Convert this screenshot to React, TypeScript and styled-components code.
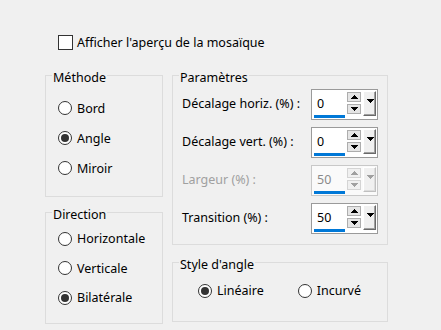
import React from 'react'
import styled, { createGlobalStyle } from 'styled-components'

const GlobalStyle = createGlobalStyle`
    html, body {
        margin: 0;
        padding: 0;
        background: #f0f0f0;
    }
    body {
        font-family: 'Noto Sans', 'Open Sans', sans-serif;
        font-size: 12.5px;
        color: #000;
    }
`

const methodes = ['Bord', 'Angle', 'Miroir']
const directions = ['Horizontale', 'Verticale', 'Bilatérale']

const params = [
    { label: 'Décalage horiz. (%) :', value: '0' },
    { label: 'Décalage vert. (%) :', value: '0' },
    { label: 'Largeur (%) :', value: '50', disabled: true },
    { label: 'Transition (%) :', value: '50' },
]

// petit triangle net (pas d'anticrénelage), comme les flèches Win32
function Tri({ w, h, up, color }: { w: number; h: number; up?: boolean; color: string }) {
    const pts = up ? `0,${h} ${w / 2},0 ${w},${h}` : `0,0 ${w},0 ${w / 2},${h}`
    return (
        <svg width={w} height={h} viewBox={`0 0 ${w} ${h}`} shapeRendering="crispEdges" style={{ display: 'block' }}>
            <polygon points={pts} fill={color} />
        </svg>
    )
}

function Radio({ label, checked }: { label: string; checked?: boolean }) {
    return (
        <RadioRow>
            <Circle>{checked && <Dot />}</Circle>
            <span>{label}</span>
        </RadioRow>
    )
}

function SpinBox({ value, disabled }: { value: string; disabled?: boolean }) {
    const arrowColor = disabled ? '#a0a0a0' : '#000'
    return (
        <Spin $disabled={disabled}>
            <Field $disabled={disabled}>{value}</Field>
            <Steppers>
                <StepButton $disabled={disabled}>
                    <Tri w={7} h={4} up color={arrowColor} />
                </StepButton>
                <StepButton $disabled={disabled}>
                    <Tri w={7} h={4} color={arrowColor} />
                </StepButton>
            </Steppers>
            <DropButton $disabled={disabled}>
                <Tri w={8} h={4} color={arrowColor} />
            </DropButton>
        </Spin>
    )
}

function App() {
    return (
        <>
            <GlobalStyle />
            <Page>
                <CheckRow>
                    <CheckBox />
                    <span>Afficher l'aperçu de la mosaïque</span>
                </CheckRow>
                <Columns>
                    <Column $width={118} $gap={4.5}>
                        <Group $pt={7} $pb={13}>
                            <Legend>Méthode</Legend>
                            <Body $pl={12}>
                                {methodes.map((m) => (
                                    <Radio key={m} label={m} checked={m === 'Angle'} />
                                ))}
                            </Body>
                        </Group>
                        <Group $pt={1.5} $pb={10} $rowH={29.5}>
                            <Legend>Direction</Legend>
                            <Body $pl={12}>
                                {directions.map((d) => (
                                    <Radio key={d} label={d} checked={d === 'Bilatérale'} />
                                ))}
                            </Body>
                        </Group>
                    </Column>
                    <Column $width={216} $gap={7.5}>
                        <Group $pt={2.5} $pb={10}>
                            <Legend>Paramètres</Legend>
                            <Body $pl={9} $pr={9} $gap={7}>
                                {params.map((p) => (
                                    <ParamRow key={p.label}>
                                        <ParamLabel $disabled={p.disabled}>{p.label}</ParamLabel>
                                        <SpinBox value={p.value} disabled={p.disabled} />
                                    </ParamRow>
                                ))}
                            </Body>
                        </Group>
                        <Group $pt={2.5} $pb={15}>
                            <Legend>Style d'angle</Legend>
                            <InlineRadios>
                                <Radio label="Linéaire" checked />
                                <Radio label="Incurvé" />
                            </InlineRadios>
                        </Group>
                    </Column>
                </Columns>
            </Page>
        </>
    )
}

export default App

const Page = styled.div`
    width: 441px;
    height: 330px;
    box-sizing: border-box;
    padding: 34px 0 0 45px;
`

const CheckRow = styled.div`
    display: flex;
    align-items: center;
    gap: 4px;
    height: 17px;
    margin-left: 13px;
`

const CheckBox = styled.div`
    width: 15px;
    height: 15px;
    box-sizing: border-box;
    border: 1px solid #333;
    background: #fff;
`

const Columns = styled.div`
    display: flex;
    gap: 9px;
    margin-top: 14px;
`

const Column = styled.div<{ $width: number; $gap: number }>`
    display: flex;
    flex-direction: column;
    width: ${({ $width }) => $width}px;
    gap: ${({ $gap }) => $gap}px;
`

const Group = styled.fieldset<{ $pt: number; $pb: number; $rowH?: number }>`
    margin: 0;
    min-width: 0;
    border: 1px solid #dcdcdc;
    padding: ${({ $pt, $pb }) => `${$pt}px 0 ${$pb}px`};
    --row-h: ${({ $rowH }) => $rowH ?? 30}px;
`

const Legend = styled.legend`
    margin-left: 6px;
    padding: 4px 1px 0;
    line-height: 17px;
`

const Body = styled.div<{ $pl: number; $pr?: number; $gap?: number }>`
    display: flex;
    flex-direction: column;
    gap: ${({ $gap }) => $gap ?? 0}px;
    padding: 0 ${({ $pr }) => $pr ?? 0}px 0 ${({ $pl }) => $pl}px;
`

const RadioRow = styled.div`
    display: flex;
    align-items: center;
    gap: 5px;
    height: var(--row-h, 30px);
`

const Circle = styled.div`
    width: 14px;
    height: 14px;
    box-sizing: border-box;
    border: 1px solid #333;
    border-radius: 50%;
    background: #fff;
    display: flex;
    align-items: center;
    justify-content: center;
    flex-shrink: 0;
`

const Dot = styled.div`
    width: 8px;
    height: 8px;
    border-radius: 50%;
    background: #333;
`

const InlineRadios = styled.div`
    display: flex;
    gap: 34px;
    padding-left: 25px;
`

const ParamRow = styled.div`
    display: flex;
    align-items: center;
    justify-content: space-between;
`

const ParamLabel = styled.span<{ $disabled?: boolean }>`
    padding-bottom: 2px;
    color: ${({ $disabled }) => ($disabled ? '#a0a0a0' : '#000')};
`

const Spin = styled.div<{ $disabled?: boolean }>`
    display: flex;
    align-items: flex-start;
    flex: none;
    width: 67px;
    height: 31px;
    box-sizing: border-box;
    padding: 2px 1px 1px 2px;
    gap: 2px;
    border: 1px solid ${({ $disabled }) => ($disabled ? '#c8c8c8' : '#9a9a9a')};
    background: ${({ $disabled }) => ($disabled ? '#fafafa' : '#fff')};
`

const Field = styled.div<{ $disabled?: boolean }>`
    flex: none;
    width: 31px;
    height: 26px;
    box-sizing: border-box;
    padding: 3px 0 0 3px;
    border-bottom: 3px solid #0078d7;
    color: ${({ $disabled }) => ($disabled ? '#8a8a8a' : '#000')};
    line-height: 17px;
`

const Steppers = styled.div`
    flex: none;
    display: flex;
    flex-direction: column;
    gap: 2px;
    width: 14px;
`

const StepButton = styled.div<{ $disabled?: boolean }>`
    height: 10px;
    box-sizing: border-box;
    border: 1px solid ${({ $disabled }) => ($disabled ? '#d4d4d4' : '#adadad')};
    background: ${({ $disabled }) => ($disabled ? '#f0f0f0' : '#e5e5e5')};
    display: flex;
    align-items: center;
    justify-content: center;
`

const DropButton = styled.div<{ $disabled?: boolean }>`
    flex: none;
    width: 13px;
    height: 25px;
    margin-top: -1px;
    box-sizing: border-box;
    background: #f0f0f0;
    border-top: 1px solid #fff;
    border-left: 1px solid #fff;
    border-right: 1px solid ${({ $disabled }) => ($disabled ? '#c0c0c0' : '#696969')};
    border-bottom: 1px solid ${({ $disabled }) => ($disabled ? '#c0c0c0' : '#696969')};
    box-shadow: inset -1px -1px 0 ${({ $disabled }) => ($disabled ? '#dcdcdc' : '#a0a0a0')};
    display: flex;
    justify-content: center;
    align-items: flex-start;
    padding-top: 7px;
`
